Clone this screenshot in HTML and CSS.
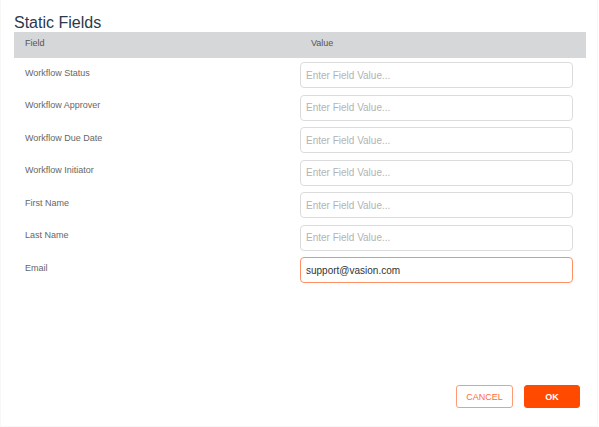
FILE: index.html
```html
<!DOCTYPE html>
<html lang="en">
<head>
<meta charset="utf-8">
<title>Static Fields</title>
<link rel="stylesheet" href="styles.css">
</head>
<body>
<div class="dialog">
  <h1 class="title">Static Fields</h1>
  <div class="table">
    <div class="head">
      <div class="head-cell">Field</div>
      <div class="head-cell">Value</div>
    </div>
    <div class="row">
      <div class="label">Workflow Status</div>
      <div class="value"><input class="field" type="text" placeholder="Enter Field Value..."></div>
    </div>
    <div class="row">
      <div class="label">Workflow Approver</div>
      <div class="value"><input class="field" type="text" placeholder="Enter Field Value..."></div>
    </div>
    <div class="row">
      <div class="label">Workflow Due Date</div>
      <div class="value"><input class="field" type="text" placeholder="Enter Field Value..."></div>
    </div>
    <div class="row">
      <div class="label">Workflow Initiator</div>
      <div class="value"><input class="field" type="text" placeholder="Enter Field Value..."></div>
    </div>
    <div class="row">
      <div class="label">First Name</div>
      <div class="value"><input class="field" type="text" placeholder="Enter Field Value..."></div>
    </div>
    <div class="row">
      <div class="label">Last Name</div>
      <div class="value"><input class="field" type="text" placeholder="Enter Field Value..."></div>
    </div>
    <div class="row">
      <div class="label">Email</div>
      <div class="value"><input class="field field-active" type="text" value="support@vasion.com" placeholder="Enter Field Value..."></div>
    </div>
  </div>
  <div class="footer">
    <button class="btn btn-cancel" type="button">CANCEL</button>
    <button class="btn btn-ok" type="button">OK</button>
  </div>
</div>
</body>
</html>
```

FILE: styles.css
```css
* {
  box-sizing: border-box;
}

html, body {
  margin: 0;
  padding: 0;
  background: #ffffff;
}

body {
  font-family: "Liberation Sans", Arial, sans-serif;
}

.dialog {
  width: 598px;
  height: 427px;
  border: 1px solid #f7f7f7;
  border-top-color: #ffffff;
  padding: 13px 11px 13px 13px;
  display: flex;
  flex-direction: column;
}

.title {
  margin: 0;
  font-size: 16px;
  line-height: 18px;
  font-weight: normal;
  color: #2b394c;
}

.table {
  width: 572px;
}

.head {
  display: grid;
  grid-template-columns: 286px 286px;
  height: 26px;
  background: #d6d7d9;
}

.head-cell {
  padding: 6px 11px 0;
  font-size: 9px;
  line-height: 10px;
  color: #555555;
}

.row {
  display: grid;
  grid-template-columns: 286px 286px;
  height: 32.5px;
}

.label {
  padding: 9.5px 11px 0;
  font-size: 9px;
  line-height: 10px;
  color: #666666;
}

.value {
  padding-top: 4px;
}

.field {
  display: block;
  width: 273px;
  height: 26px;
  margin: 0;
  padding: 0 5px;
  border: 1px solid #dcdcdc;
  border-radius: 4px;
  background: #ffffff;
  font-family: "Liberation Sans", Arial, sans-serif;
  font-size: 10px;
  color: #333333;
  outline: none;
}

.field::placeholder {
  color: #b3b3b3;
}

.field-active {
  border-color: #ff9064;
}

.footer {
  margin-top: auto;
  display: flex;
  justify-content: flex-end;
  gap: 11px;
  padding: 0 6px 5px 0;
}

.btn {
  height: 23px;
  border-radius: 3px;
  font-family: "Liberation Sans", Arial, sans-serif;
  font-size: 9px;
  padding: 0;
  cursor: pointer;
}

.btn-cancel {
  width: 57px;
  background: #ffffff;
  border: 1px solid #ff9a74;
  color: #ff6b3a;
}

.btn-ok {
  width: 56px;
  background: #ff4a00;
  border: 1px solid #ff4a00;
  color: #ffffff;
  font-weight: bold;
}
```
